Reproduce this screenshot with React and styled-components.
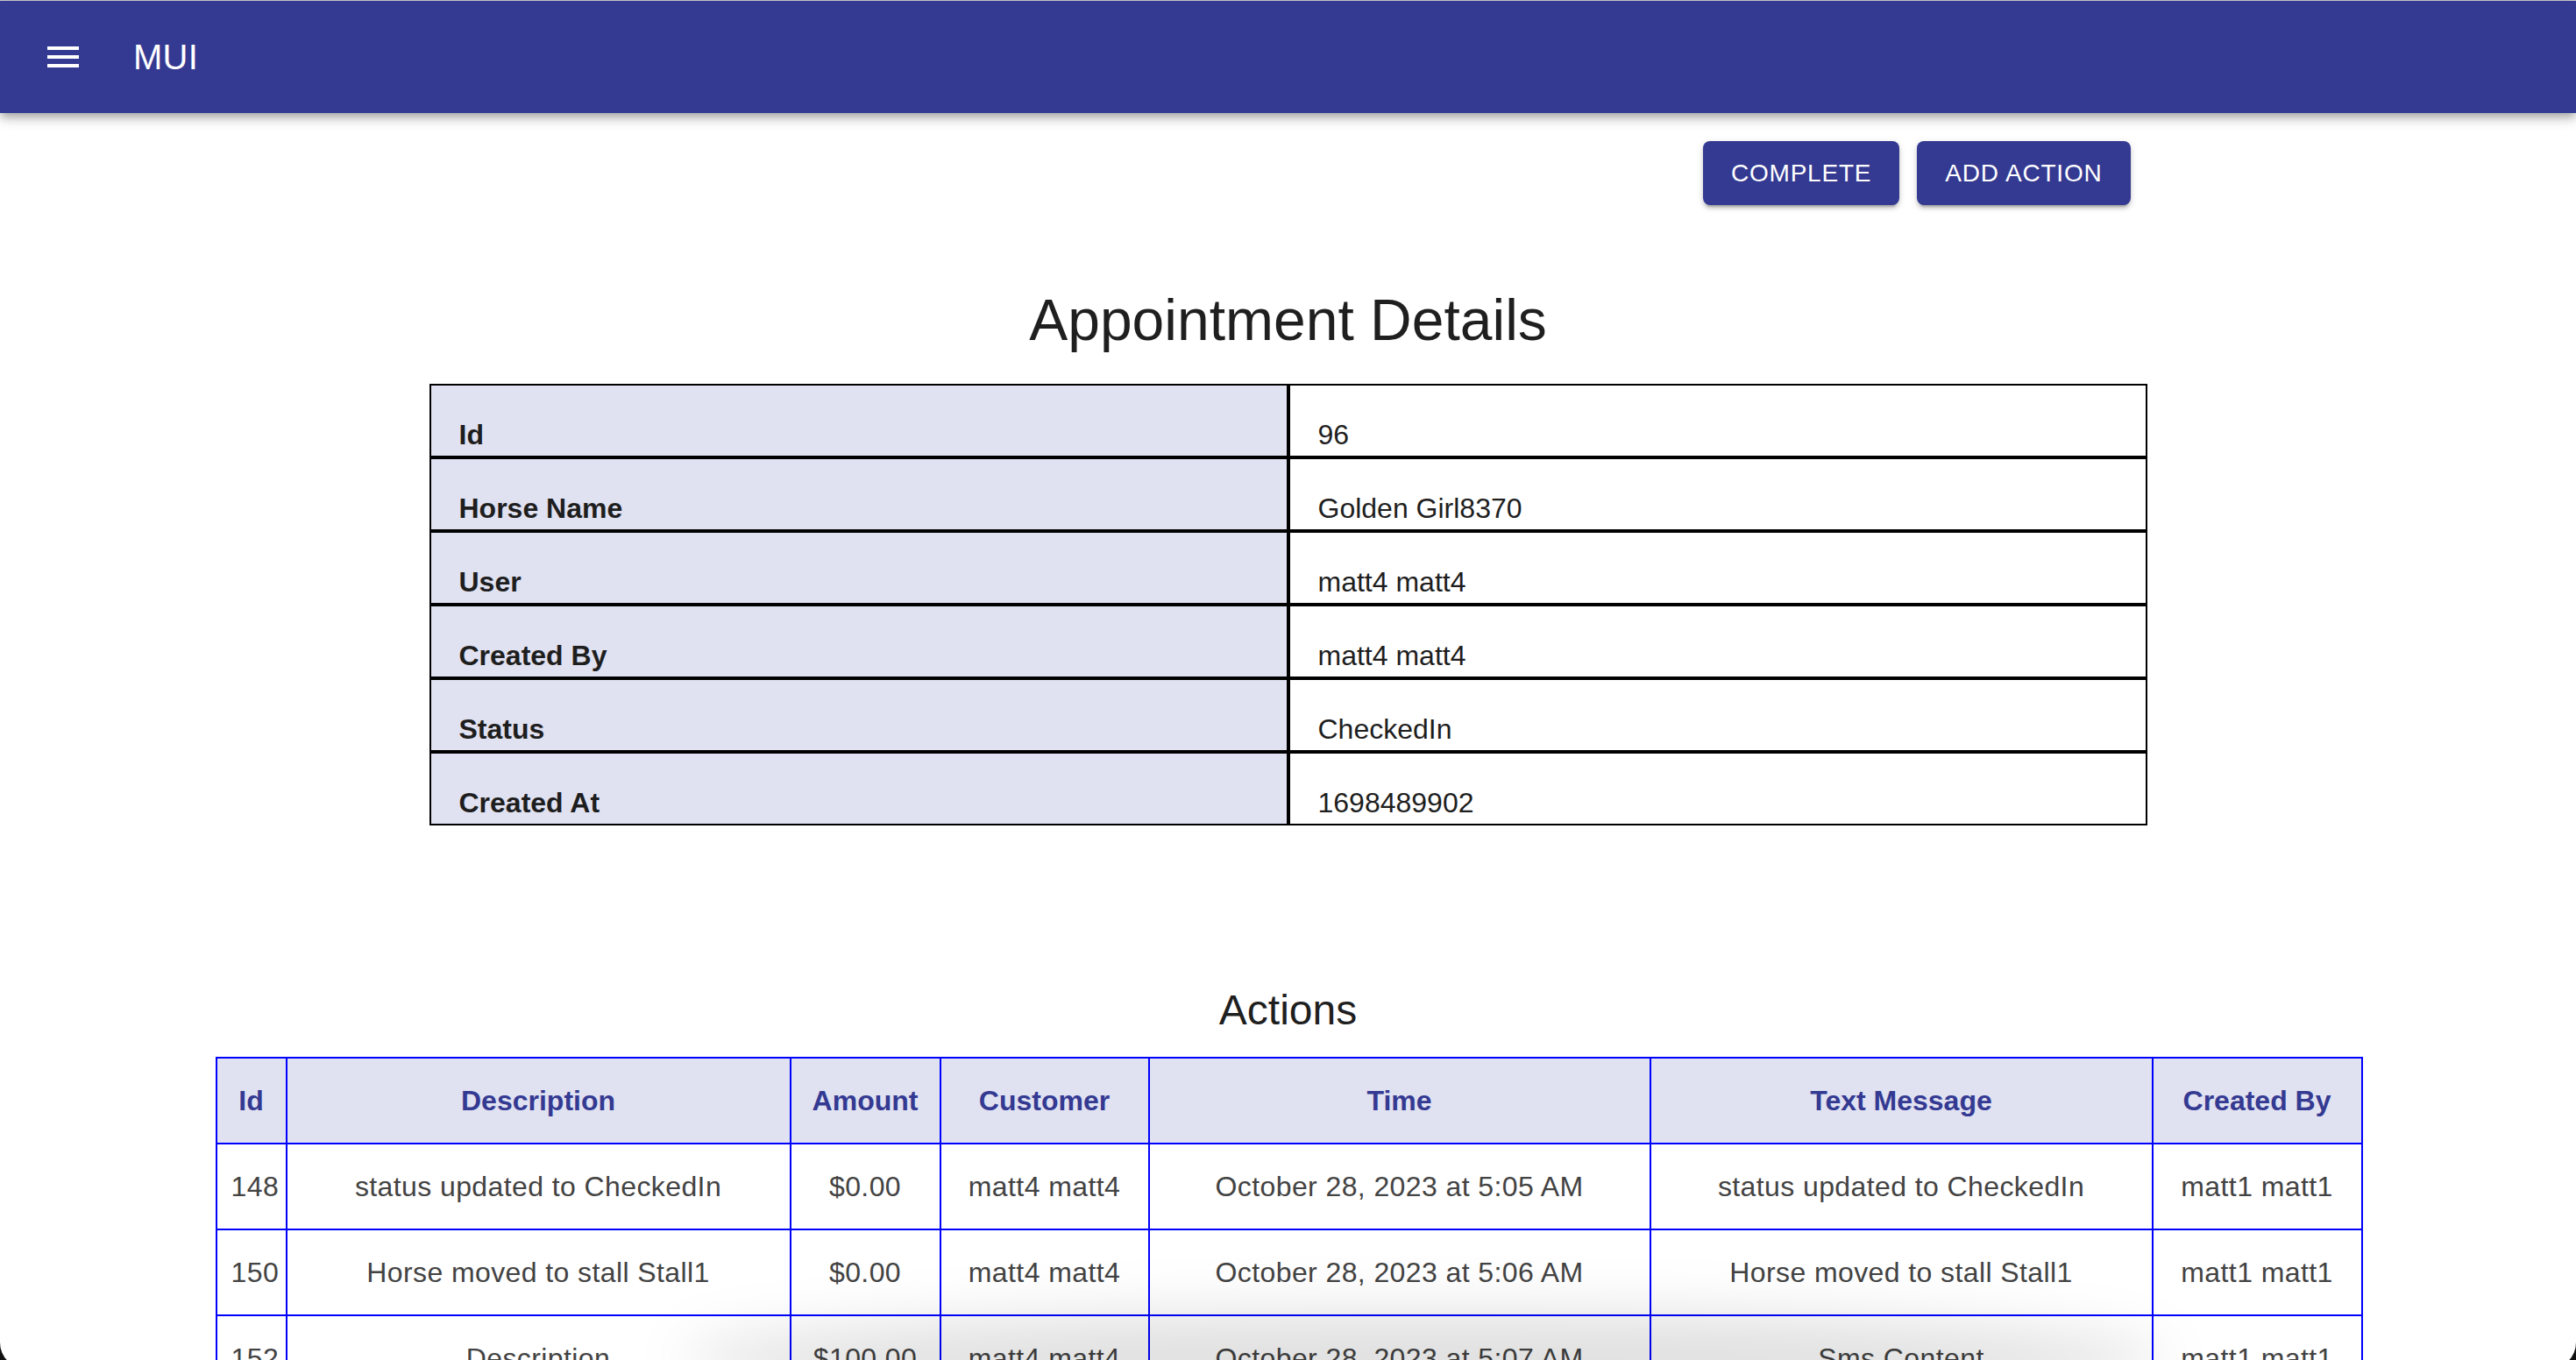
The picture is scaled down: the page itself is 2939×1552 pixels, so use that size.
import React from "react";
import styled, { createGlobalStyle } from "styled-components";

const INDIGO = "#343a92";
const LAVENDER = "#e0e1f1";

const GlobalStyle = createGlobalStyle`
  html, body {
    margin: 0;
    padding: 0;
    overflow: hidden;
    background: #fff;
    font-family: "Liberation Sans", Arial, Helvetica, sans-serif;
  }
  * { box-sizing: border-box; }
`;

const Page = styled.div`
  border-top: 1px solid #cdcdd0;
  min-height: 1552px;
`;

const AppBar = styled.header`
  height: 128px;
  background: ${INDIGO};
  color: #fff;
  position: relative;
  z-index: 2;
  box-shadow: 0 4px 8px -2px rgba(0, 0, 0, 0.2), 0 8px 10px 0 rgba(0, 0, 0, 0.14),
    0 2px 20px 0 rgba(0, 0, 0, 0.12);
`;

const Toolbar = styled.div`
  height: 100%;
  display: flex;
  align-items: center;
  padding: 0 48px;
`;

const MenuButton = styled.button`
  display: flex;
  align-items: center;
  justify-content: center;
  margin: 0 32px 0 -24px;
  padding: 24px;
  border: none;
  background: transparent;
  color: #fff;
  cursor: pointer;

  svg {
    width: 48px;
    height: 48px;
    fill: currentColor;
  }
`;

const Brand = styled.div`
  font-size: 40px;
  line-height: 64px;
  letter-spacing: 0.3px;
`;

const Content = styled.main`
  width: 1960px;
  margin: 0 auto;
`;

const ButtonRow = styled.div`
  display: flex;
  justify-content: flex-end;
  gap: 20px;
  padding-right: 19px;
  margin-top: 32px;
`;

const ActionButton = styled.button`
  font-family: inherit;
  font-size: 28px;
  line-height: 49px;
  letter-spacing: 0.8px;
  text-transform: uppercase;
  color: #fff;
  background: ${INDIGO};
  border: none;
  border-radius: 8px;
  padding: 12px 32px;
  cursor: pointer;
  box-shadow: 0 6px 2px -4px rgba(0, 0, 0, 0.2), 0 4px 4px 0 rgba(0, 0, 0, 0.14),
    0 2px 10px 0 rgba(0, 0, 0, 0.12);
`;

const Heading = styled.h1`
  margin: ${(p) => p.$mt}px 0 ${(p) => p.$mb}px;
  text-align: center;
  font-weight: 400;
  color: #1f1f1f;
  font-size: ${(p) => p.$size}px;
  line-height: ${(p) => p.$lh}px;
`;

const DetailsTable = styled.table`
  width: 100%;
  border-collapse: separate;
  border-spacing: 0;
  table-layout: fixed;

  tr {
    height: 84px;
  }
`;

const DetailCell = styled.td`
  border: 2px solid #000;
  padding: 0 32px 6px;
  vertical-align: bottom;
  font-size: 32px;
  line-height: 36px;
  color: #1e1e1e;
  background: ${(p) => (p.$label ? LAVENDER : "#fff")};
  font-weight: ${(p) => (p.$label ? 700 : 400)};
`;

const ActionsSection = styled.section`
  width: 2448px;
  margin: 0 auto;
`;

const ActionsTable = styled.table`
  width: 100%;
  border-collapse: collapse;
  table-layout: fixed;
  border: 2px solid #0000ff;
`;

const Col = styled.col`
  width: ${(p) => p.$w}px;
`;

const HeadCell = styled.th`
  border: 2px solid #0000ff;
  background: ${LAVENDER};
  color: ${INDIGO};
  font-size: 32px;
  font-weight: 700;
  line-height: 34px;
  padding: 31px 16px;
  text-align: center;
`;

const BodyCell = styled.td`
  border: 2px solid #0000ff;
  color: #434343;
  font-size: 32px;
  font-weight: 300;
  letter-spacing: 0.4px;
  line-height: 34px;
  padding: 31px 16px;
  text-align: center;
  white-space: nowrap;
`;

const BottomShade = styled.div`
  position: fixed;
  left: 780px;
  right: 470px;
  bottom: -55px;
  height: 110px;
  border-radius: 50%;
  background: rgba(0, 0, 0, 0.12);
  filter: blur(32px);
  pointer-events: none;
  z-index: 5;
`;

const WindowFrame = styled.div`
  position: fixed;
  top: -40px;
  left: 0;
  right: 0;
  bottom: -10px;
  border-radius: 0 0 30px 30px;
  box-shadow: 0 0 0 60px #111;
  pointer-events: none;
  z-index: 6;
`;

const details = [
  ["Id", "96"],
  ["Horse Name", "Golden Girl8370"],
  ["User", "matt4 matt4"],
  ["Created By", "matt4 matt4"],
  ["Status", "CheckedIn"],
  ["Created At", "1698489902"],
];

const columns = [
  { title: "Id", width: 80 },
  { title: "Description", width: 575 },
  { title: "Amount", width: 171 },
  { title: "Customer", width: 238 },
  { title: "Time", width: 572 },
  { title: "Text Message", width: 573 },
  { title: "Created By", width: 239 },
];

const actions = [
  ["148", "status updated to CheckedIn", "$0.00", "matt4 matt4", "October 28, 2023 at 5:05 AM", "status updated to CheckedIn", "matt1 matt1"],
  ["150", "Horse moved to stall Stall1", "$0.00", "matt4 matt4", "October 28, 2023 at 5:06 AM", "Horse moved to stall Stall1", "matt1 matt1"],
  ["152", "Description", "$100.00", "matt4 matt4", "October 28, 2023 at 5:07 AM", "Sms Content", "matt1 matt1"],
  ["154", "Horse moved to stall Stall2", "$0.00", "matt4 matt4", "October 28, 2023 at 5:09 AM", "Horse moved to stall Stall2", "matt1 matt1"],
];

const MenuIcon = () => (
  <svg viewBox="0 0 24 24" aria-hidden="true">
    <path d="M3 18h18v-2H3v2zm0-5h18v-2H3v2zm0-7v2h18V6H3z" />
  </svg>
);

const App = () => {
  return (
    <Page>
      <GlobalStyle />
      <AppBar>
        <Toolbar>
          <MenuButton aria-label="menu">
            <MenuIcon />
          </MenuButton>
          <Brand>MUI</Brand>
        </Toolbar>
      </AppBar>

      <Content>
        <ButtonRow>
          <ActionButton>Complete</ActionButton>
          <ActionButton>Add Action</ActionButton>
        </ButtonRow>

        <Heading $size={66} $lh={80} $mt={91} $mb={33}>
          Appointment Details
        </Heading>

        <DetailsTable>
          <tbody>
            {details.map(([label, value]) => (
              <tr key={label}>
                <DetailCell $label>{label}</DetailCell>
                <DetailCell>{value}</DetailCell>
              </tr>
            ))}
          </tbody>
        </DetailsTable>
      </Content>

      <ActionsSection>
        <Heading as="h2" $size={48} $lh={64} $mt={179} $mb={21}>
          Actions
        </Heading>
        <ActionsTable>
          <colgroup>
            {columns.map((c) => (
              <Col key={c.title} $w={c.width} />
            ))}
          </colgroup>
          <thead>
            <tr>
              {columns.map((c) => (
                <HeadCell key={c.title}>{c.title}</HeadCell>
              ))}
            </tr>
          </thead>
          <tbody>
            {actions.map((row) => (
              <tr key={row[0]}>
                {row.map((cell, i) => (
                  <BodyCell key={i}>{cell}</BodyCell>
                ))}
              </tr>
            ))}
          </tbody>
        </ActionsTable>
      </ActionsSection>

      <BottomShade />
      <WindowFrame />
    </Page>
  );
};

export default App;
